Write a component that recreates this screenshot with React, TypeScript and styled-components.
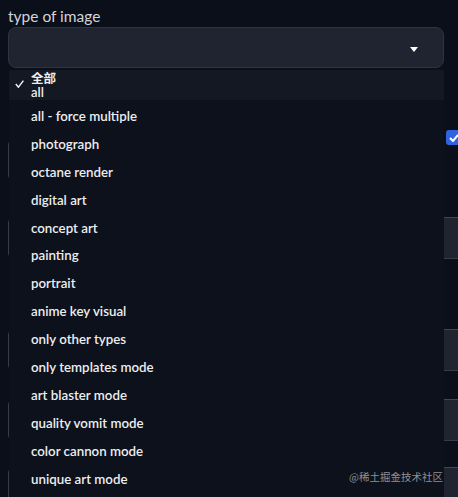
import React from "react";
import styled, { createGlobalStyle } from "styled-components";

const GlobalStyle = createGlobalStyle`
	html, body {
		margin: 0;
		padding: 0;
		background: #0b0f19;
		overflow: hidden;
	}
	body {
		font-family: Lato, "Noto Sans CJK SC", sans-serif;
		color: #e5e7eb;
	}
`;

const Page = styled.div`
	position: relative;
	width: 480px;
	height: 497px;
	padding: 6px 8px 0;
	box-sizing: border-box;
`;

const Label = styled.div`
	font-size: 15.5px;
	line-height: 21px;
	color: #d1d5db;
`;

const Select = styled.div`
	position: relative;
	width: 436px;
	height: 41px;
	box-sizing: border-box;
	background: #1f2430;
	border: 1px solid #2d3340;
	border-radius: 8px;
	z-index: 2;
`;

const Caret = styled.svg`
	position: absolute;
	right: 25px;
	top: 19px;
`;

const Menu = styled.ul`
	position: absolute;
	top: 42px;
	left: 0;
	width: 435px;
	margin: 0;
	padding: 0;
	list-style: none;
	background: #0d111b;
	z-index: 3;
	height: 460px;
`;

const Item = styled.li<{ $active?: boolean }>`
	position: relative;
	display: flex;
	flex-direction: column;
	justify-content: center;
	height: ${(p) => (p.$active ? "30px" : "27.92px")};
	margin-bottom: ${(p) => (p.$active ? "2px" : "0")};
	padding-left: 22px;
	background: ${(p) => (p.$active ? "#131823" : "transparent")};
	font-size: 13.3px;
	font-weight: 600;
	color: #eceef2;
	white-space: nowrap;
`;

const Check = styled.svg`
	position: absolute;
	left: 6px;
	top: 10px;
`;

const Line = styled.span<{ $h: number; $size: number }>`
	display: block;
	height: ${(p) => p.$h}px;
	line-height: ${(p) => p.$h}px;
	font-size: ${(p) => p.$size}px;
`;

const Form = styled.div`
	display: flex;
	flex-direction: column;
`;

const Row = styled.div<{ $mt: number }>`
	display: flex;
	align-items: flex-start;
	margin-top: ${(p) => p.$mt}px;
`;

const Field = styled.div<{ $mt: number; $w?: number }>`
	margin-top: ${(p) => p.$mt}px;
	width: ${(p) => (p.$w ? `${p.$w}px` : "100%")};
	height: 42px;
	box-sizing: border-box;
	background: #1f2430;
	border: 1px solid #363c48;
	border-top-color: #404653;
	border-radius: 6px;
	flex-shrink: 0;
`;

const CheckBox = styled.div`
	margin-left: 10px;
	width: 15px;
	height: 15px;
	border-radius: 3px;
	background: #2f63e0;
	display: flex;
	align-items: center;
	justify-content: center;
`;

const Watermark = styled.div`
	position: absolute;
	right: 37px;
	bottom: 13px;
	font-family: "Noto Sans CJK SC", sans-serif;
	font-size: 10.5px;
	color: #8b909a;
	z-index: 5;
`;

const options = [
	"all - force multiple",
	"photograph",
	"octane render",
	"digital art",
	"concept art",
	"painting",
	"portrait",
	"anime key visual",
	"only other types",
	"only templates mode",
	"art blaster mode",
	"quality vomit mode",
	"color cannon mode",
	"unique art mode",
];

export default function App() {
	return (
		<>
			<GlobalStyle />
			<Page>
				<Label>type of image</Label>
				<Select>
					<Caret width="8" height="5" viewBox="0 0 8 5">
						<path d="M0 0 L8 0 L4 5 Z" fill="#ffffff" />
					</Caret>
					<Menu>
						<Item $active>
							<Check width="9" height="8" viewBox="0 0 9 8">
								<path d="M0.8 4 L3.4 7.2 L8.4 0.6" stroke="#f3f4f6" strokeWidth="1.4" fill="none" />
							</Check>
							<Line $h={14} $size={12.5}>全部</Line>
							<Line $h={12} $size={13}>all</Line>
						</Item>
						{options.map((o) => (
							<Item key={o}>{o}</Item>
						))}
					</Menu>
				</Select>
				<Form>
					<Row $mt={62}>
						<Field $mt={9} $w={428} />
						<CheckBox>
							<svg width="10" height="8" viewBox="0 0 10 8">
								<path d="M1 4 L4 7 L9 1" stroke="#fff" strokeWidth="2" fill="none" />
							</svg>
						</CheckBox>
					</Row>
					<Field $mt={36} />
					<Field $mt={70} />
					<Field $mt={28} />
					<Field $mt={26} />
				</Form>
				<Watermark>@稀土掘金技术社区</Watermark>
			</Page>
		</>
	);
}
